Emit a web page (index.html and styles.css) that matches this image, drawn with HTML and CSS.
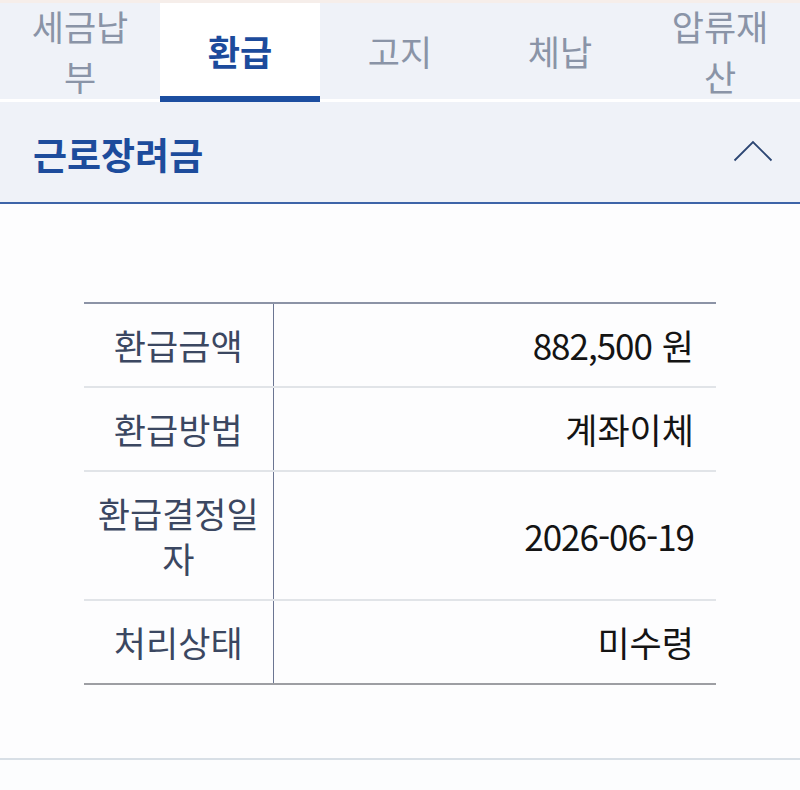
FILE: index.html
```html
<!DOCTYPE html>
<html lang="ko">
<head>
<meta charset="utf-8">
<title>근로장려금 환급</title>
<link rel="stylesheet" href="styles.css">
</head>
<body>
<div class="topstrip"></div>
<nav class="tabs">
  <a class="tab">세금납부</a>
  <a class="tab active">환급</a>
  <a class="tab">고지</a>
  <a class="tab">체납</a>
  <a class="tab">압류재산</a>
</nav>
<section class="panel">
  <header class="panel-head">
    <h2 class="panel-title">근로장려금</h2>
    <svg class="chevron" width="40" height="22" viewBox="0 0 40 22" aria-hidden="true">
      <polyline points="1.5,20.5 20,2 38.5,20.5" fill="none" stroke="#2c4673" stroke-width="1.8"/>
    </svg>
  </header>
  <div class="panel-body">
    <table class="info">
      <tr><th>환급금액</th><td><span class="num">882,500</span> 원</td></tr>
      <tr><th>환급방법</th><td>계좌이체</td></tr>
      <tr><th>환급결정일자</th><td><span class="num">2026-06-19</span></td></tr>
      <tr><th>처리상태</th><td>미수령</td></tr>
    </table>
  </div>
</section>
<div class="after"></div>
</body>
</html>
```
FILE: styles.css
```css
html, body {
  margin: 0;
  padding: 0;
  background: #fdfdfe;
  font-family: "Noto Sans CJK KR", "Noto Sans", sans-serif;
}
.topstrip {
  height: 3px;
  background: #f6eeea;
}
.tabs {
  display: flex;
  background: #eff2f8;
  height: 99px;
}
.tab {
  box-sizing: border-box;
  flex: 1 1 0;
  display: flex;
  align-items: center;
  justify-content: center;
  padding: 0 20px 0;
  text-align: center;
  font-size: 35px;
  line-height: 50px;
  color: #8a94a7;
  border-bottom: 3px solid #ffffff;
}
.tab.active {
  background: #ffffff;
  color: #1c4b9c;
  font-weight: 700;
  border-bottom: 6px solid #1c4ea0;
  padding-top: 3px;
}
.panel-head {
  box-sizing: border-box;
  height: 102px;
  background: #eff2f8;
  border-bottom: 2px solid #3e64a8;
  display: flex;
  align-items: center;
  justify-content: space-between;
  padding: 0 27px 0 33px;
}
.panel-title {
  margin: 4px 0 0;
  font-size: 37px;
  font-weight: 700;
  color: #1d4c9c;
  line-height: 50px;
}
.chevron {
  display: block;
  margin-top: -2px;
}
.panel-body {
  padding: 98px 84px 73px;
  background: #fdfdfe;
  border-bottom: 2px solid #d8dfe6;
}
.info {
  width: 100%;
  border-collapse: collapse;
  border-top: 2px solid #8c93a6;
  border-bottom: 2px solid #9d9ea3;
}
.info tr + tr {
  border-top: 2px solid #e1e4e8;
}
.info th {
  box-sizing: border-box;
  width: 189px;
  padding: 18px 10px 19px;
  font-weight: 400;
  font-size: 35px;
  line-height: 45px;
  color: #3b4761;
  text-align: center;
  border-right: 1.5px solid #6b7592;
}
.info td {
  padding: 18px 22px 19px 10px;
  font-size: 35px;
  line-height: 45px;
  color: #141414;
  text-align: right;
}
.num {
  letter-spacing: -1px;
}
.after {
  height: 40px;
  background: #fcfdfe;
}
```
